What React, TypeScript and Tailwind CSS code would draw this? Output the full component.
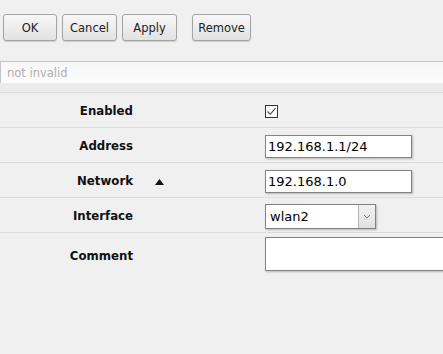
import React from "react";

const font = { fontFamily: '"DejaVu Sans", Verdana, sans-serif' };

function Btn({ children, w }: { children: React.ReactNode; w: string }) {
  return (
    <button
      className={`${w} h-[27px] rounded-[3px] border border-[#a3a3a3] bg-gradient-to-b from-[#f7f7f7] to-[#e2e2e2] pt-[2px] text-[11.5px] text-[#222] shadow-[0_1px_1px_rgba(0,0,0,0.15)] shrink-0`}
    >
      {children}
    </button>
  );
}

function Row({
  label,
  extra,
  children,
}: {
  label: string;
  extra?: React.ReactNode;
  children: React.ReactNode;
}) {
  return (
    <div className="flex items-center border-t border-[#dadada] h-[35px] pt-[3px]">
      <div className="w-[133px] shrink-0 text-right text-[11.75px] font-bold text-[#111]">{label}</div>
      <div className="w-[132px] shrink-0 flex items-center pl-[22px]">{extra}</div>
      <div className="flex-1 flex items-center">{children}</div>
    </div>
  );
}

function Input({ value }: { value: string }) {
  return (
    <div className="w-[147px] h-[23px] bg-white border border-[#828282] shadow-[1px_1px_2px_rgba(0,0,0,0.25)] flex items-center pl-[2px] text-[13px] text-black">
      {value}
    </div>
  );
}

export default function App() {
  return (
    <div className="w-[443px] h-[354px] bg-[#f0f0f0] overflow-hidden" style={font}>
      <div className="flex pt-[14px] pl-[3px] gap-[5px]">
        <Btn w="w-[54px]">OK</Btn>
        <Btn w="w-[55px]">Cancel</Btn>
        <Btn w="w-[55px]">Apply</Btn>
        <div className="w-[5px] shrink-0" />
        <Btn w="w-[59px]">Remove</Btn>
      </div>
      <div className="mt-[20px] h-[22px] border-t border-l border-[#c4c4c4] bg-gradient-to-b from-[#f7f7f7] to-[#fcfcfc] flex items-center pl-[6px] pt-[2px] text-[11.5px] text-[#b0b0b0]">
        not invalid
      </div>
      <div className="h-[9px] bg-[#ececec]" />
      <Row label="Enabled">
        <div className="w-[13px] h-[13px] border border-[#333] bg-[#fafafa] flex items-center justify-center">
          <svg width="11" height="11" viewBox="0 0 11 11">
            <path d="M1.5 5.5 L4.3 8.3 L9.5 2.2" fill="none" stroke="#444" strokeWidth="1.1" />
          </svg>
        </div>
      </Row>
      <Row label="Address">
        <Input value="192.168.1.1/24" />
      </Row>
      <Row
        label="Network"
        extra={
          <svg width="9" height="6" viewBox="0 0 9 6">
            <path d="M0 6 L4.5 0 L9 6 Z" fill="#111" />
          </svg>
        }
      >
        <Input value="192.168.1.0" />
      </Row>
      <Row label="Interface">
        <div className="w-[111px] h-[25px] bg-white border border-[#828282] shadow-[1px_1px_2px_rgba(0,0,0,0.25)] flex">
          <div className="flex-1 flex items-center pl-[4px] text-[13px] text-black">wlan2</div>
          <div className="w-[17px] border-l border-[#b5b5b5] bg-gradient-to-b from-[#f2f2f2] to-[#e0e0e0] flex items-center justify-center">
            <svg width="8" height="5" viewBox="0 0 8 5">
              <path d="M1 1 L4 4 L7 1" fill="none" stroke="#777" strokeWidth="1" />
            </svg>
          </div>
        </div>
      </Row>
      <div className="flex border-t border-[#dadada]">
        <div className="w-[133px] shrink-0 pt-[15px] text-right text-[11.75px] font-bold text-[#111]">Comment</div>
        <div className="w-[132px] shrink-0" />
        <div className="flex-1 pt-[4px] min-w-0">
          <div className="w-[200px] h-[34px] bg-white border border-[#828282] shadow-[1px_1px_2px_rgba(0,0,0,0.25)]" />
        </div>
      </div>
    </div>
  );
}
